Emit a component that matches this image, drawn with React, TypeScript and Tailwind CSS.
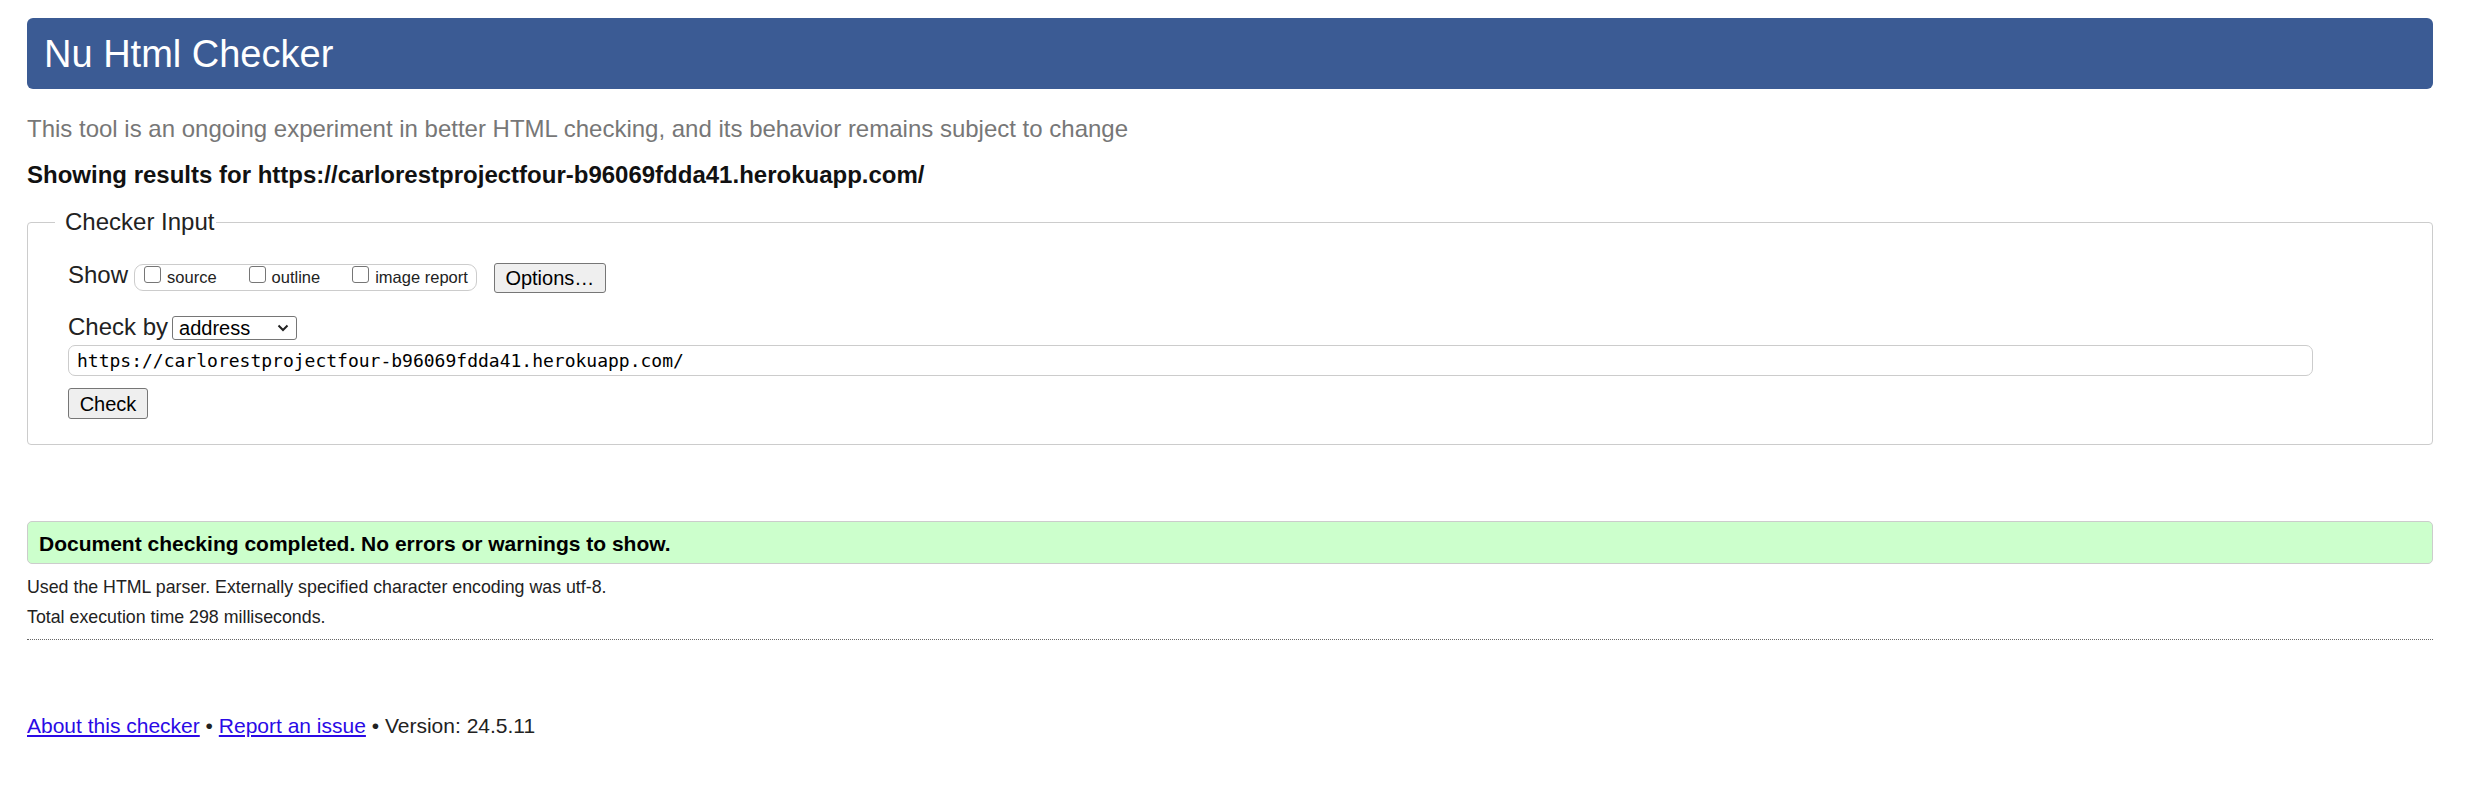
import React from "react";

function Box({ className = "" }: { className?: string }) {
  return (
    <span
      className={`mt-[1px] block h-[17px] w-[17px] shrink-0 rounded-[3px] border border-[#767676] bg-white ${className}`}
    />
  );
}

export default function App() {
  return (
    <div className="min-h-[799px] bg-white font-['Liberation_Sans',Arial,sans-serif] text-[#222]">
      <div className="ml-[27px] w-[2406px] pt-[18px]">
        <header className="h-[71px] rounded-[6px] bg-[#3b5b94] pl-[17px] pt-[2px]">
          <h1 className="text-[38px] leading-[69px] text-white">Nu Html Checker</h1>
        </header>

        <p className="mt-[26px] text-[24px] leading-[28px] text-[#777]">
          This tool is an ongoing experiment in better HTML checking, and its behavior remains subject to change
        </p>
        <p className="mt-[18px] text-[24px] font-bold leading-[28px] text-[#111]">
          Showing results for https://carlorestprojectfour-b96069fdda41.herokuapp.com/
        </p>

        <fieldset className="mt-[19px] rounded-[4px] border border-[#ccc] px-[27px] pb-[25px]">
          <legend className="pl-[10px] pr-[2px] text-[24px] leading-[28px]">Checker Input</legend>
          <div className="pl-[13px] pt-[25px]">
            <div className="flex items-start">
              <span className="text-[24px] leading-[28px]">Show</span>
              <div className="ml-[6px] mt-[3px] flex h-[27px] items-start rounded-[9px] border border-[#ccc] pl-[9px] pr-[8px]">
                <Box />
                <span className="ml-[6px] mt-[2px] text-[16.5px] leading-[20px]">source</span>
                <Box className="ml-[32px]" />
                <span className="ml-[6px] mt-[2px] text-[16.5px] leading-[20px]">outline</span>
                <Box className="ml-[32px]" />
                <span className="ml-[6px] mt-[2px] text-[16.5px] leading-[20px]">image report</span>
              </div>
              <button className="ml-[17px] mt-[2px] h-[30px] w-[112px] rounded-[3px] border border-[#767676] bg-[#efefef] text-[20px] leading-[24px] text-black">
                Options…
              </button>
            </div>

            <div className="mt-[20px] flex items-start">
              <span className="text-[24px] leading-[28px]">Check by</span>
              <div className="ml-[4px] mt-[3px] flex h-[24px] w-[125px] items-center justify-between rounded-[3px] border border-[#767676] bg-white pl-[6px] pr-[7px]">
                <span className="text-[20px] leading-[22px] text-black">address</span>
                <svg width="12" height="8" viewBox="0 0 12 8" fill="none">
                  <path d="M1.5 1.5 L6 6 L10.5 1.5" stroke="#222" strokeWidth="2" />
                </svg>
              </div>
            </div>

            <div className="mt-[4px] flex h-[31px] w-[2245px] items-center rounded-[7px] border border-[#ccc] bg-white pl-[8px]">
              <span className="font-['DejaVu_Sans_Mono',monospace] text-[18px] leading-[22px] text-black">
                https://carlorestprojectfour-b96069fdda41.herokuapp.com/
              </span>
            </div>

            <button className="mt-[12px] block h-[31px] w-[80px] rounded-[3px] border border-[#767676] bg-[#efefef] text-[20px] leading-[24px] text-black">
              Check
            </button>
          </div>
        </fieldset>

        <div className="mt-[76px] flex h-[43px] items-center rounded-[5px] border border-[#ccc] bg-[#ccffcc] pl-[11px] pt-[2px]">
          <p className="text-[21px] font-bold leading-[26px] text-black">
            Document checking completed. No errors or warnings to show.
          </p>
        </div>

        <p className="mt-[11px] text-[17.8px] leading-[24px] text-[#222]">
          Used the HTML parser. Externally specified character encoding was utf-8.
        </p>
        <p className="mt-[6px] text-[17.8px] leading-[24px] text-[#222]">Total execution time 298 milliseconds.</p>

        <hr className="mt-[10px] border-0 border-t border-dotted border-[#666]" />

        <p className="mt-[73px] text-[21px] leading-[26px] text-[#222]">
          <a href="#" className="text-[#2a0ae6] underline">
            About this checker
          </a>{" "}
          •{" "}
          <a href="#" className="text-[#2a0ae6] underline">
            Report an issue
          </a>{" "}
          • Version: 24.5.11
        </p>
      </div>
    </div>
  );
}
